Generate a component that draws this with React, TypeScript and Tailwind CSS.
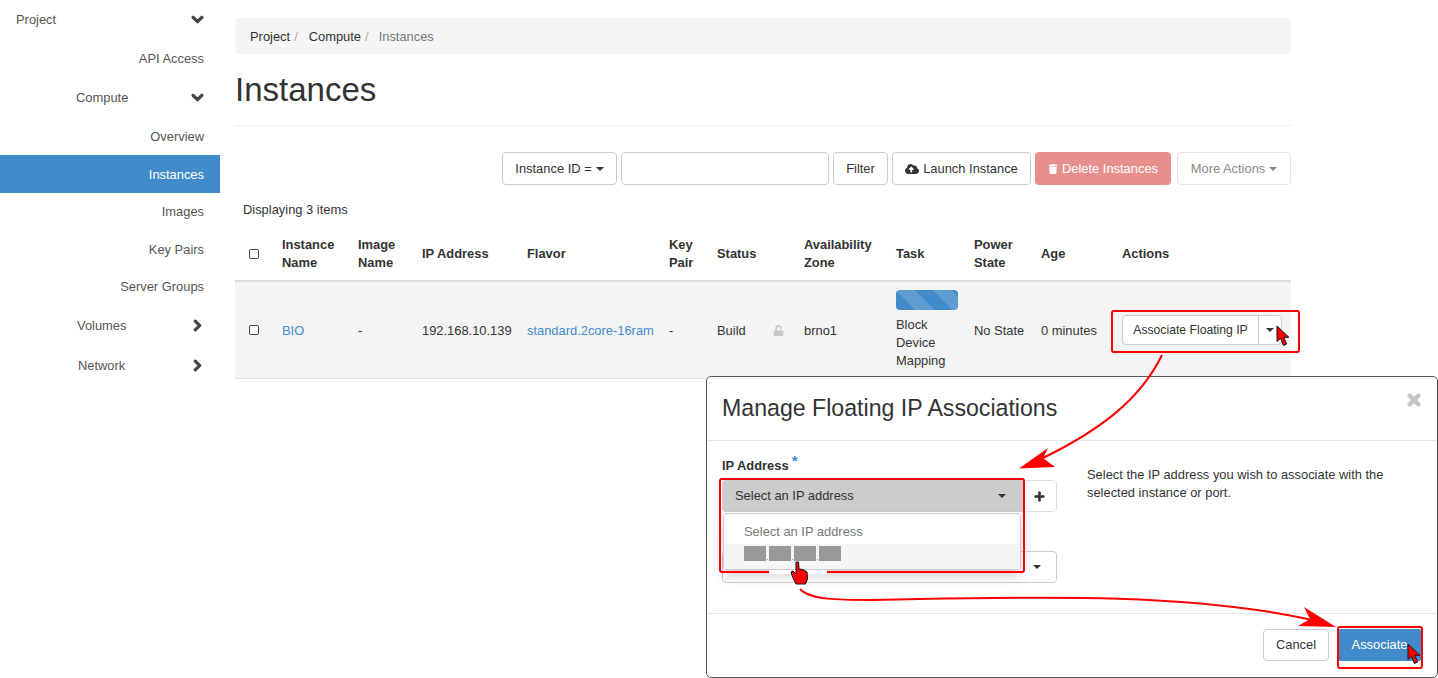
import React from "react";
import { FaChevronDown, FaChevronRight, FaCloudUploadAlt, FaTrash, FaUnlock, FaPlus, FaTimes } from "react-icons/fa";

const Caret = ({ className = "border-t-[#333]" }: { className?: string }) => (
  <span className={`inline-block w-0 h-0 border-x-[4px] border-t-[4px] border-x-transparent ${className}`} />
);

const Check = () => <span className="block w-[10px] h-[10px] rounded-[2px] border-[1.5px] border-[#444] bg-white" />;

const SideItem = ({ label, h, active }: { label: string; h: string; active?: boolean }) => (
  <div className={`flex items-center justify-end pr-[16px] ${h} ${active ? "bg-[#428bca] text-white" : ""}`}>{label}</div>
);

const SideGroup = ({ label, h, pl, open }: { label: string; h: string; pl: string; open?: boolean }) => (
  <div className={`flex items-center justify-between pr-[16px] ${h} ${pl}`}>
    <span>{label}</span>
    {open ? (
      <FaChevronDown className="text-[13px] text-[#444] stroke-[45]" />
    ) : (
      <FaChevronRight className="text-[13px] text-[#444] stroke-[45]" />
    )}
  </div>
);

const Sidebar = () => (
  <div className="w-[220px] shrink-0 text-[#555]">
    <SideGroup label="Project" h="h-[39px]" pl="pl-[16px]" open />
    <SideItem label="API Access" h="h-[39px]" />
    <SideGroup label="Compute" h="h-[39px]" pl="pl-[76px]" open />
    <SideItem label="Overview" h="h-[38px] pt-[1px]" />
    <SideItem label="Instances" h="h-[38px] pt-[1px]" active />
    <SideItem label="Images" h="h-[37px]" />
    <SideItem label="Key Pairs" h="h-[38px] pt-[1px]" />
    <SideItem label="Server Groups" h="h-[37px]" />
    <SideGroup label="Volumes" h="h-[40px] pt-[1px]" pl="pl-[77px]" />
    <SideGroup label="Network" h="h-[40px] pt-[1px]" pl="pl-[78px]" />
  </div>
);

const Toolbar = () => (
  <div className="flex justify-end h-[33px] gap-[4px]">
    <button className="w-[115px] rounded-[4px] border border-[#ccc] bg-white flex items-center justify-center gap-[4px]">
      Instance ID = <Caret />
    </button>
    <input className="w-[208px] rounded-[4px] border border-[#ccc] bg-white" />
    <button className="w-[55px] rounded-[4px] border border-[#ccc] bg-white">Filter</button>
    <button className="w-[139px] rounded-[4px] border border-[#ccc] bg-white flex items-center justify-center gap-[4px]">
      <FaCloudUploadAlt className="text-[14px]" /> Launch Instance
    </button>
    <button className="w-[136px] rounded-[4px] bg-[#e78f8d] text-white flex items-center justify-center gap-[4px]">
      <FaTrash className="text-[10px]" /> Delete Instances
    </button>
    <button className="ml-[2px] w-[114px] rounded-[4px] border border-[#e3e3e3] bg-white text-[#888] flex items-center justify-center gap-[4px]">
      More Actions <Caret className="border-t-[#888]" />
    </button>
  </div>
);

const InstancesTable = () => (
  <table className="w-full table-fixed border-collapse leading-[18px]">
    <colgroup>
      <col className="w-[40px]" />
      <col className="w-[76px]" />
      <col className="w-[64px]" />
      <col className="w-[105px]" />
      <col className="w-[142px]" />
      <col className="w-[48px]" />
      <col className="w-[87px]" />
      <col className="w-[92px]" />
      <col className="w-[78px]" />
      <col className="w-[67px]" />
      <col className="w-[81px]" />
      <col className="w-[176px]" />
    </colgroup>
    <thead>
      <tr className="h-[55px] border-b-[2px] border-[#ddd] font-bold text-left">
        <th className="pl-[14px] pt-[2px]"><Check /></th>
        <th className="pl-[7px] pt-[2px]">Instance Name</th>
        <th className="pl-[7px] pt-[2px]">Image Name</th>
        <th className="pl-[7px] pt-[2px]">IP Address</th>
        <th className="pl-[7px] pt-[2px]">Flavor</th>
        <th className="pl-[7px] pt-[2px]">Key Pair</th>
        <th className="pl-[7px] pt-[2px]">Status</th>
        <th className="pl-[7px] pt-[2px]">Availability Zone</th>
        <th className="pl-[7px] pt-[2px]">Task</th>
        <th className="pl-[7px] pt-[2px]">Power State</th>
        <th className="pl-[7px] pt-[2px]">Age</th>
        <th className="pl-[7px] pt-[2px]">Actions</th>
      </tr>
    </thead>
    <tbody>
      <tr className="h-[97px] bg-[#f4f4f4] border-b border-[#ddd]">
        <td className="pl-[14px]"><Check /></td>
        <td className="pl-[7px] pt-[2px] text-[#428bca]">BIO</td>
        <td className="pl-[7px] pt-[2px]">-</td>
        <td className="pl-[7px] pt-[2px]">192.168.10.139</td>
        <td className="pl-[7px] pt-[2px] text-[#428bca] whitespace-nowrap">standard.2core-16ram</td>
        <td className="pl-[7px] pt-[2px]">-</td>
        <td className="pl-[7px] pt-[2px]">
          <div className="flex items-center justify-between pr-[13px]">
            Build <FaUnlock className="text-[11px] text-[#c8c8c8]" />
          </div>
        </td>
        <td className="pl-[7px] pt-[2px]">brno1</td>
        <td className="pl-[7px]">
          <div className="h-[20px] w-[62px] mb-[6px] rounded-[4px] bg-[#428bca] bg-[linear-gradient(45deg,rgba(255,255,255,.15)_25%,transparent_25%,transparent_50%,rgba(255,255,255,.15)_50%,rgba(255,255,255,.15)_75%,transparent_75%,transparent)] bg-size-[37px_37px]" />
          Block Device Mapping
        </td>
        <td className="pl-[7px] pt-[2px]">No State</td>
        <td className="pl-[7px] pt-[2px] whitespace-nowrap">0 minutes</td>
        <td className="pl-[7px]">
          <div className="flex w-[160px] h-[30px] text-[12.2px] rounded-[4px] border border-[#ccc] bg-white">
            <span className="w-[136px] flex items-center justify-center border-r border-[#ccc]">Associate Floating IP</span>
            <span className="flex-1 flex items-center justify-center"><Caret /></span>
          </div>
        </td>
      </tr>
    </tbody>
  </table>
);

const IpDropdown = () => (
  <div className="absolute left-[1px] top-[33px] w-[298px] h-[57px] rounded-[4px] border border-[#ccc] bg-white shadow-[0_6px_12px_rgba(0,0,0,.18)] pt-[8px] text-[#777]">
    <div className="pl-[20px] h-[19px] leading-[19px]">Select an IP address</div>
    <div className="mt-[3px] h-[25px] bg-[#f5f5f5] pl-[20px] flex items-start">
      <span className="w-[22px] h-[15px] mt-[2px] bg-[#999]" />
      <span className="w-[1px] h-[1px] mt-[15px] mx-[1px] bg-[#999]" />
      <span className="w-[22px] h-[15px] mt-[2px] bg-[#999]" />
      <span className="w-[1px] h-[1px] mt-[15px] mx-[1px] bg-[#999]" />
      <span className="w-[22px] h-[15px] mt-[2px] bg-[#999]" />
      <span className="w-[1px] h-[1px] mt-[15px] mx-[1px] bg-[#999]" />
      <span className="w-[22px] h-[15px] mt-[2px] bg-[#999]" />
    </div>
  </div>
);

const Modal = () => (
  <div className="absolute left-[706px] top-[376px] w-[732px] h-[302px] flex flex-col rounded-[5px] border border-[#555] bg-white">
    <div className="h-[64px] shrink-0 border-b border-[#e5e5e5] flex items-center justify-between pl-[15px] pr-[14px]">
      <h4 className="text-[23.15px] leading-none text-[#333]">Manage Floating IP Associations</h4>
      <FaTimes className="text-[18px] text-[#c4c4c4] stroke-[30] -mt-[17px]" />
    </div>
    <div className="flex-1 flex pl-[15px] pt-[16px]">
      <div className="w-[335px] shrink-0">
        <div className="h-[23px] pb-[6px] font-bold flex items-center">
          IP Address <span className="ml-[3px] -mt-[8px] text-[15px] text-[#428bca]">*</span>
        </div>
        <div className="relative">
          <div className="flex h-[32px]">
            <div className="flex-1 flex items-center justify-between pl-[13px] pr-[18px] rounded-l-[4px] bg-[#ccc]">
              Select an IP address <Caret />
            </div>
            <div className="w-[33px] flex items-center justify-center rounded-r-[4px] border border-[#ddd] pr-[2px]">
              <FaPlus className="text-[11px] stroke-[30]" />
            </div>
          </div>
          <div className="mt-[39px] h-[32px] rounded-[4px] border border-[#ccc] flex items-center justify-end pr-[15px]">
            <Caret />
          </div>
          <IpDropdown />
        </div>
      </div>
      <p className="ml-[30px] w-[320px] pt-[9px] leading-[18px]">
        Select the IP address you wish to associate with the selected instance or port.
      </p>
    </div>
    <div className="h-[64px] shrink-0 border-t border-[#e5e5e5] flex justify-end items-start gap-[9px] pt-[15px] pr-[16px]">
      <button className="w-[66px] h-[32px] rounded-[4px] border border-[#ccc] bg-white">Cancel</button>
      <button className="w-[83px] h-[32px] rounded-[2px] bg-[#428bca] text-white">Associate</button>
    </div>
  </div>
);

const Pointer = ({ x, y }: { x: number; y: number }) => (
  <path
    transform={`translate(${x} ${y})`}
    d="M0 0 L0 15.5 L3.6 12.4 L6.4 19.5 L9.6 18 L6.8 11.4 L11.8 11.2 Z"
    fill="#f00"
    stroke="#111"
    strokeWidth="1"
  />
);

const Annotations = () => (
  <svg className="absolute inset-0 pointer-events-none" width="1438" height="678" fill="none">
    <rect x="1112" y="311" width="187" height="41" rx="2" stroke="#f00" strokeWidth="2" />
    <rect x="720" y="479" width="304" height="93" rx="2" stroke="#f00" strokeWidth="2" />
    <rect x="769" y="570" width="58" height="4" fill="#fff" />
    <rect x="1338" y="627" width="84" height="41" rx="2" stroke="#f00" strokeWidth="2" />
    <path d="M1162 355 C1140 400 1100 430 1043 458" stroke="#f00" strokeWidth="2" />
    <path d="M1019 468.5 L1048 448 L1043 458 L1055 467 Z" fill="#f00" />
    <path d="M800 589 C810 600 840 600 870 600 C1000 598 1180 590 1312 620" stroke="#f00" strokeWidth="2" />
    <path d="M1336 627 L1304 607 L1310 619 L1298 626 Z" fill="#f00" />
    <Pointer x={1277} y={326} />
    <Pointer x={1408} y={644} />
    <path
      d="M796 562 L798.5 562 L799 569 L803 569.5 L807 572 L807.5 579 L805.5 584 L796 584 L793 578 L791 572 L793 571 L796 574 Z"
      fill="#f00"
      stroke="#111"
      strokeWidth="1"
    />
  </svg>
);

export default function App() {
  return (
    <div className="relative w-[1438px] h-[678px] overflow-hidden bg-white flex font-['Liberation_Sans',sans-serif] text-[12.9px] text-[#333]">
      <Sidebar />
      <div className="ml-[15px] w-[1056px] pt-[18px]">
        <div className="h-[36px] pt-[1px] rounded-[4px] bg-[#f5f5f5] flex items-center pl-[15px] gap-[4px]">
          <span>Project</span>
          <span className="text-[#aaa] mr-[7px]">/</span>
          <span>Compute</span>
          <span className="text-[#aaa] mr-[6px]">/</span>
          <span className="text-[#777]">Instances</span>
        </div>
        <h1 className="mt-[17px] h-[37px] text-[33px] leading-[37px] text-[#333]">Instances</h1>
        <div className="mt-[17px] border-t border-[#eee]" />
        <div className="mt-[26px]"><Toolbar /></div>
        <div className="mt-[16px] ml-[8px] h-[17px] leading-[17px]">Displaying 3 items</div>
        <div className="mt-[8px]"><InstancesTable /></div>
      </div>
      <Modal />
      <Annotations />
    </div>
  );
}
